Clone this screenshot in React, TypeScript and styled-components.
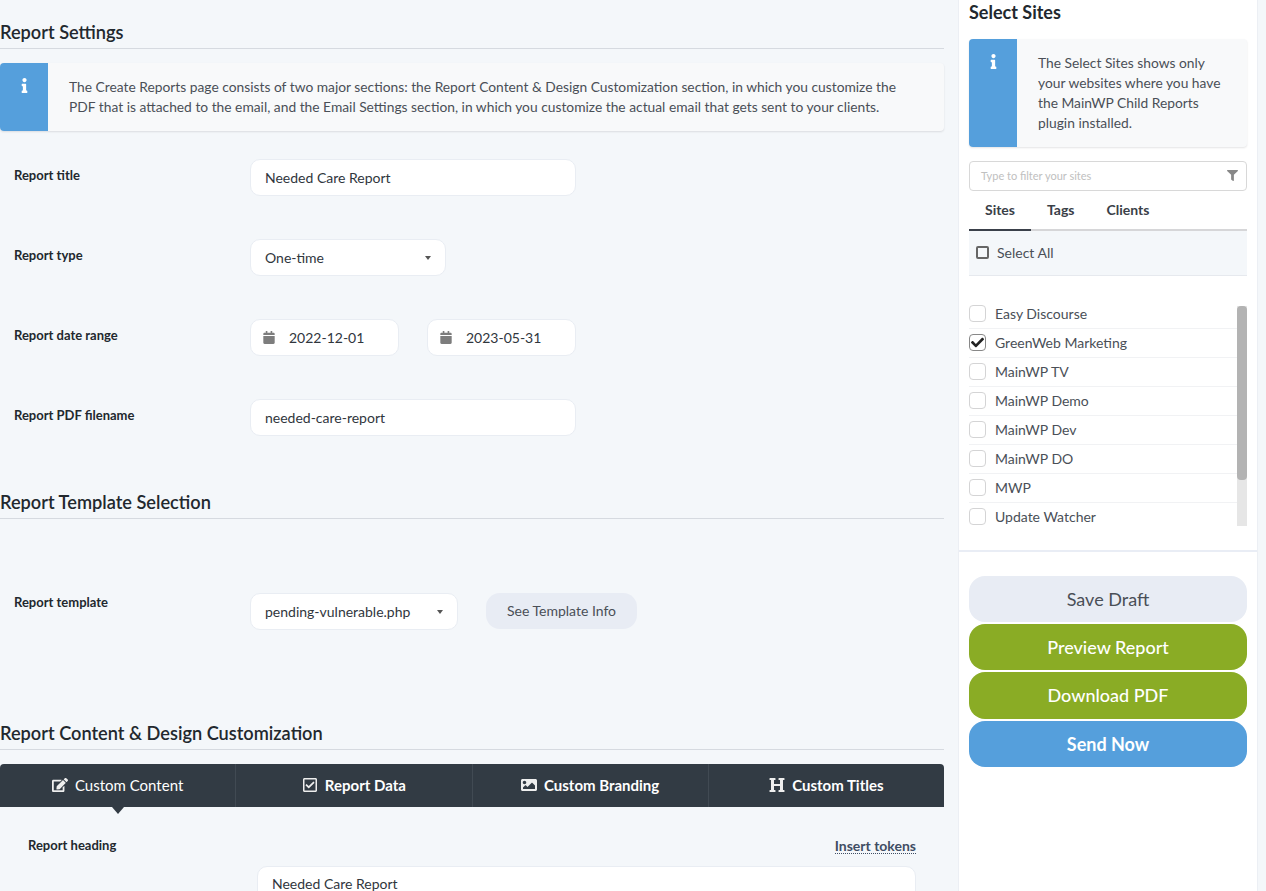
import styled, { createGlobalStyle } from 'styled-components'
import { FaCalendar, FaCheck, FaEdit, FaFilter, FaHeading, FaImage, FaInfo, FaRegCheckSquare } from 'react-icons/fa'

const sites = [
  { name: 'Easy Discourse' },
  { name: 'GreenWeb Marketing', checked: true },
  { name: 'MainWP TV' },
  { name: 'MainWP Demo' },
  { name: 'MainWP Dev' },
  { name: 'MainWP DO' },
  { name: 'MWP' },
  { name: 'Update Watcher' },
]

function App() {
  return (
    <Page>
      <GlobalStyle />
      <Main>
        <SectionTitle $top={21}>Report Settings</SectionTitle>
        <Message>
          <MessageIcon $width={48}><FaInfo /></MessageIcon>
          <MessageText $padding="14px 30px 14px 21px">
            The Create Reports page consists of two major sections: the Report Content &amp; Design Customization section, in which you customize the PDF that is attached to the email, and the Email Settings section, in which you customize the actual email that gets sent to your clients.
          </MessageText>
        </Message>
        <Form>
          <Row>
            <Label>Report title</Label>
            <Field $width={326}>Needed Care Report</Field>
          </Row>
          <Row>
            <Label>Report type</Label>
            <Field $width={196}>One-time<Caret /></Field>
          </Row>
          <Row>
            <Label>Report date range</Label>
            <DateRange>
              <DateField><FaCalendar />2022-12-01</DateField>
              <DateField><FaCalendar />2023-05-31</DateField>
            </DateRange>
          </Row>
          <Row>
            <Label>Report PDF filename</Label>
            <Field $width={326}>needed-care-report</Field>
          </Row>
        </Form>
        <SectionTitle $top={55}>Report Template Selection</SectionTitle>
        <TemplateRow>
          <TemplateLabel>Report template</TemplateLabel>
          <Field $width={208}>pending-vulnerable.php<Caret /></Field>
          <TemplateButton>See Template Info</TemplateButton>
        </TemplateRow>
        <SectionTitle $top={0}>Report Content &amp; Design Customization</SectionTitle>
        <Tabs>
          <Tab $active><FaEdit />Custom Content</Tab>
          <Tab><FaRegCheckSquare />Report Data</Tab>
          <Tab><FaImage />Custom Branding</Tab>
          <Tab><FaHeading />Custom Titles</Tab>
        </Tabs>
        <HeadingRow>
          <HeadingLabel>Report heading</HeadingLabel>
          <TokensLink href="#">Insert tokens</TokensLink>
        </HeadingRow>
        <HeadingField>Needed Care Report</HeadingField>
      </Main>

      <Sidebar>
        <SidebarTop>
          <SidebarTitle>Select Sites</SidebarTitle>
          <Message>
            <MessageIcon $width={48}><FaInfo /></MessageIcon>
            <MessageText $padding="14px 20px 14px 21px">
              The Select Sites shows only your websites where you have the MainWP Child Reports plugin installed.
            </MessageText>
          </Message>
          <Filter>
            Type to filter your sites
            <FaFilter />
          </Filter>
          <SiteTabs>
            <SiteTab $active>Sites</SiteTab>
            <SiteTab>Tags</SiteTab>
            <SiteTab>Clients</SiteTab>
          </SiteTabs>
          <SelectAll>
            <SelectAllBox />
            Select All
          </SelectAll>
          <SiteArea>
            <SiteList>
              {sites.map((site) => (
                <Site key={site.name}>
                  <SiteBox $checked={site.checked}>{site.checked && <FaCheck />}</SiteBox>
                  {site.name}
                </Site>
              ))}
            </SiteList>
            <ScrollTrack>
              <ScrollThumb />
            </ScrollTrack>
          </SiteArea>
        </SidebarTop>
        <Actions>
          <ActionButton $variant="light">Save Draft</ActionButton>
          <ActionButton $variant="green">Preview Report</ActionButton>
          <ActionButton $variant="green">Download PDF</ActionButton>
          <ActionButton $variant="blue">Send Now</ActionButton>
        </Actions>
      </Sidebar>
    </Page>
  )
}

const GlobalStyle = createGlobalStyle`
  html, body {
    margin: 0;
    height: 100%;
    overflow: hidden;
    background: #f4f7fa;
    font-family: Lato, "Liberation Sans", sans-serif;
    font-size: 14px;
    color: #3a4048;
  }
  * {
    box-sizing: border-box;
  }
`

const Page = styled.div`
  display: flex;
  height: 891px;
  overflow: hidden;
`

const Main = styled.div`
  width: 944px;
  flex-shrink: 0;
  margin-right: 14px;
`

const SectionTitle = styled.h2<{ $top: number }>`
  margin: ${(p) => p.$top}px 0 14px;
  height: 28px;
  line-height: 22px;
  font-size: 18.2px;
  font-weight: 600;
  color: #22282e;
  border-bottom: 1px solid #d6dae0;
`

const Message = styled.div`
  display: flex;
  border-radius: 4px;
  background: #f8f9fa;
  box-shadow: 0 1px 2px rgba(34, 36, 38, 0.12);
  overflow: hidden;
`

const MessageIcon = styled.div<{ $width: number }>`
  width: ${(p) => p.$width}px;
  flex-shrink: 0;
  padding-top: 15px;
  display: flex;
  justify-content: center;
  align-items: flex-start;
  background: #559fdc;
  color: #fff;
  font-size: 15px;
`

const MessageText = styled.div<{ $padding: string }>`
  padding: ${(p) => p.$padding};
  line-height: 20px;
  font-size: 13.8px;
  color: #4a4f57;
`

const Form = styled.div`
  padding-top: 28px;
  display: flex;
  flex-direction: column;
  gap: 43px;
`

const Row = styled.div`
  display: flex;
  height: 37px;
  padding-left: 14px;
`

const Label = styled.div`
  width: 236px;
  flex-shrink: 0;
  padding-top: 7px;
  line-height: 18px;
  font-size: 13px;
  font-weight: 700;
  color: #22282e;
`

const Field = styled.div<{ $width: number }>`
  width: ${(p) => p.$width}px;
  height: 37px;
  padding: 0 14px;
  display: flex;
  align-items: center;
  justify-content: space-between;
  background: #fff;
  border: 1px solid #e9edf3;
  border-radius: 10px;
  font-size: 14px;
  color: #30363d;
`

const Caret = styled.span`
  width: 0;
  height: 0;
  border-left: 3.5px solid transparent;
  border-right: 3.5px solid transparent;
  border-top: 4px solid #555;
`

const DateRange = styled.div`
  display: flex;
  gap: 28px;
`

const DateField = styled.div`
  width: 149px;
  height: 37px;
  padding-left: 12px;
  display: flex;
  align-items: center;
  gap: 14px;
  background: #fff;
  border: 1px solid #e9edf3;
  border-radius: 10px;
  font-size: 14px;
  color: #30363d;

  svg {
    width: 12px;
    height: 13px;
    color: #7d7d7d;
  }
`

const TemplateRow = styled(Row)`
  margin: 74px 0 92px;
  align-items: flex-start;
`

const TemplateLabel = styled(Label)`
  padding-top: 0;
`

const TemplateButton = styled.button`
  width: 151px;
  height: 36px;
  margin-left: 28px;
  padding: 0 0 1px;
  border: 0;
  border-radius: 14px;
  background: #e8ecf4;
  font-family: inherit;
  font-size: 14px;
  color: #4a4f57;
`

const Tabs = styled.div`
  display: flex;
  height: 43px;
  background: #323b44;
  border-radius: 4px 4px 0 0;
`

const Tab = styled.div<{ $active?: boolean }>`
  position: relative;
  flex: 1;
  padding-bottom: 1px;
  display: flex;
  align-items: center;
  justify-content: center;
  gap: 7px;
  color: #fff;
  font-size: 15px;
  font-weight: ${(p) => (p.$active ? 400 : 700)};
  border-right: 1px solid #414a53;

  &:last-child {
    border-right: 0;
  }

  svg {
    font-size: 16px;
    color: #eee;
  }

  ${(p) =>
    p.$active &&
    `
    &::after {
      content: '';
      position: absolute;
      left: 50%;
      bottom: -7px;
      margin-left: -6px;
      border-left: 6px solid transparent;
      border-right: 6px solid transparent;
      border-top: 7px solid #323b44;
    }
  `}
`

const HeadingRow = styled.div`
  display: flex;
  justify-content: space-between;
  align-items: center;
  padding: 17px 28px 0;
  height: 59px;
`

const HeadingLabel = styled.div`
  font-size: 13px;
  font-weight: 700;
  color: #22282e;
`

const TokensLink = styled.a`
  font-size: 14px;
  font-weight: 700;
  color: #3f4d63;
  text-decoration: none;
  border-bottom: 1px dotted #3f4d63;
  line-height: 14px;
  margin-top: 2px;
`

const HeadingField = styled.div`
  width: 659px;
  height: 60px;
  margin-left: 257px;
  padding: 8px 14px;
  background: #fff;
  border: 1px solid #e9edf3;
  border-radius: 10px;
  font-size: 14px;
  color: #30363d;
`

const Sidebar = styled.aside`
  width: 300px;
  height: 891px;
  flex-shrink: 0;
  background: #fff;
  border-left: 1px solid #eceff4;
  border-right: 1px solid #eceff4;
`

const SidebarTop = styled.div`
  height: 552px;
  padding: 0 10px;
  border-bottom: 2px solid #e9edf5;
`

const SidebarTitle = styled.h3`
  margin: 0 0 14px;
  height: 25px;
  line-height: 25px;
  font-size: 18px;
  font-weight: 700;
  color: #22282e;
`

const Filter = styled.div`
  height: 30px;
  margin-top: 14px;
  padding: 0 8px 2px 11px;
  display: flex;
  align-items: center;
  justify-content: space-between;
  border: 1px solid #d8d8d8;
  border-radius: 4px;
  font-size: 11px;
  color: #c0c0c0;

  svg {
    font-size: 11px;
    color: #888;
  }
`

const SiteTabs = styled.div`
  display: flex;
  height: 40px;
  border-bottom: 2px solid #d6d6d8;
`

const SiteTab = styled.div<{ $active?: boolean }>`
  height: 40px;
  padding: 0 16px 2px;
  display: flex;
  align-items: center;
  font-size: 14px;
  font-weight: 700;
  color: #3a4048;
  border-bottom: 2px solid ${(p) => (p.$active ? '#3a404a' : 'transparent')};
`

const SelectAll = styled.div`
  height: 45px;
  padding: 0 0 2px 7px;
  display: flex;
  align-items: center;
  gap: 8px;
  background: #f4f7fa;
  border-bottom: 1px solid #e6e9ee;
  font-size: 14px;
  color: #4a4f57;
`

const SelectAllBox = styled.span`
  width: 13px;
  height: 13px;
  border: 2px solid #666;
  border-radius: 2px;
`

const SiteArea = styled.div`
  display: flex;
  height: 220px;
  margin-top: 30px;
`

const SiteList = styled.div`
  flex: 1;
  margin-top: -6px;
`

const Site = styled.div`
  height: 29px;
  padding-bottom: 2px;
  display: flex;
  align-items: center;
  gap: 9px;
  border-bottom: 1px solid #f1f2f4;
  font-size: 14px;
  color: #4a4f57;

  &:last-child {
    border-bottom: 0;
  }
`

const SiteBox = styled.span<{ $checked?: boolean }>`
  width: 17px;
  height: 17px;
  display: flex;
  align-items: center;
  justify-content: center;
  border: 1px solid ${(p) => (p.$checked ? '#888' : '#d4d4d5')};
  border-radius: 4px;
  background: #fff;
  color: #222;

  svg {
    font-size: 13px;
  }
`

const ScrollTrack = styled.div`
  width: 10px;
  background: #e6e6e6;
`

const ScrollThumb = styled.div`
  height: 174px;
  border-radius: 4px;
  background: #b3b3b3;
`

const Actions = styled.div`
  padding: 24px 10px 0;
  display: flex;
  flex-direction: column;
  gap: 2px;
`

const actionColors = {
  light: { bg: '#e8ecf4', fg: '#4a4f57', weight: 400 },
  green: { bg: '#8aac25', fg: '#fff', weight: 500 },
  blue: { bg: '#559fdc', fg: '#fff', weight: 700 },
}

const ActionButton = styled.button<{ $variant: keyof typeof actionColors }>`
  height: 46.2px;
  border: 0;
  border-radius: 16px;
  font-family: inherit;
  font-size: 18px;
  background: ${(p) => actionColors[p.$variant].bg};
  color: ${(p) => actionColors[p.$variant].fg};
  font-weight: ${(p) => actionColors[p.$variant].weight};
`

export default App
